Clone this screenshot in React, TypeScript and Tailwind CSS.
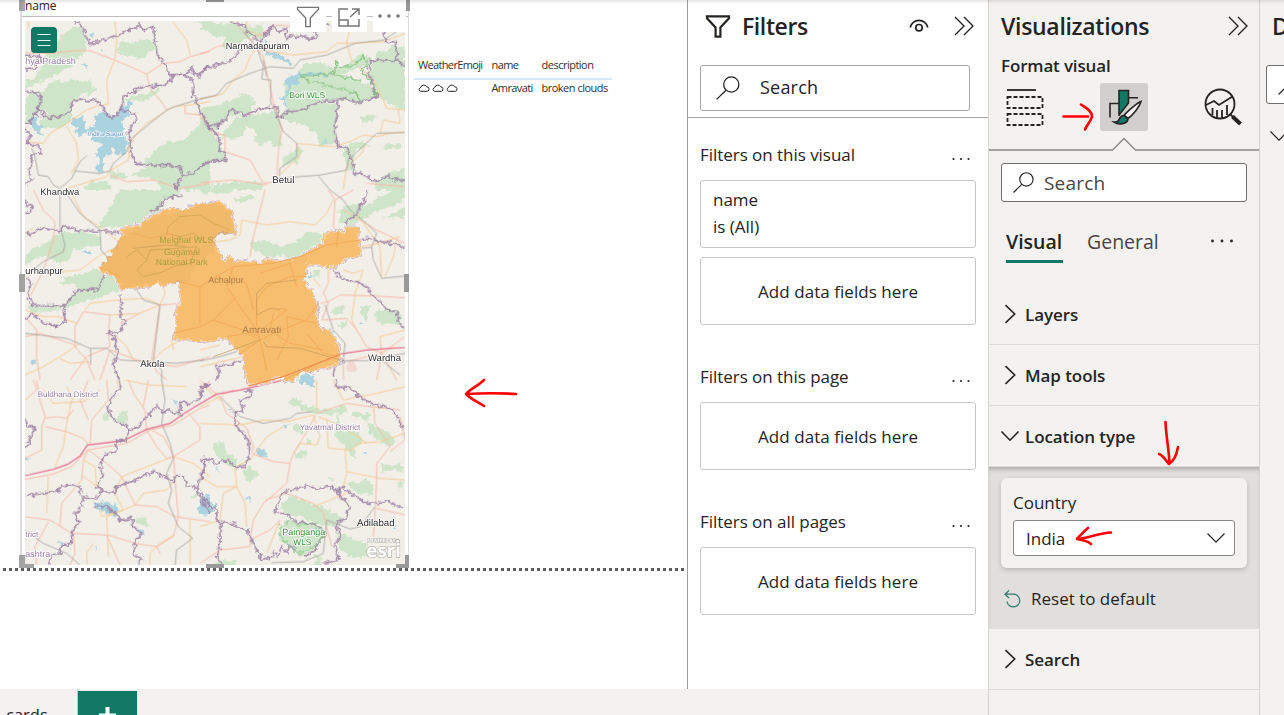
import React from "react";

type Tile = {
  x: number;
  y: number;
  green: string;
  water: string;
  pink: string;
  orange: string;
  rail: string;
  border: string;
};

const tiles: Tile[] = [
  {
    x: 0,
    y: 0,
    green:
      "M75,240 100,235 125,200 140,160 165,150 170,120 190,100 215,85 240,80 255,100 260,150 240,170 215,200 180,215 150,235 110,250 75,270Z M75,300 100,270 115,290 150,250 170,240 200,250 210,235 240,245 270,240 290,270 270,285 240,280 235,300 210,305 215,330 150,345 110,330 100,370 75,370Z M345,150 365,125 400,128 440,120 470,130 478,150 450,150 430,178 400,168 370,168Z M110,385 125,360 150,340 200,330 222,345 200,370 180,388 140,380Z M365,300 400,285 440,280 480,262 478,275 440,300 380,305Z M430,490 460,455 490,430 550,420 580,390 630,355 630,485 600,495 570,525 540,510 430,495Z M390,525 430,510 450,495 550,505 630,490 630,570 480,570 470,540Z M320,520 360,513 385,530 340,540Z M250,570 270,545 330,545 330,570Z M600,70 615,63 630,65 630,90 610,85Z",
    water:
      "M285,350 300,335 335,345 345,355 365,320 385,305 398,308 385,335 388,345 365,365 375,385 360,400 380,415 388,430 375,440 378,462 345,460 335,440 330,470 315,465 308,490 310,510 295,525 288,505 300,480 288,460 305,430 275,420 290,400 255,395 260,385 285,380Z M210,370 240,345 250,355 258,400 240,412 225,395 232,385Z M95,348 110,355 112,375 128,380 118,390 130,412 105,400 108,395 95,380Z M270,105 282,98 285,106 275,110Z M302,145 312,148 310,157Z M248,193 262,192 258,202Z M612,100 620,110",
    pink:
      "M75,158 150,160 220,152 270,152 330,175 380,195 440,222 490,190 540,185 570,170 630,155 M440,222 450,265 480,300 500,330 M555,315 555,340 600,345 630,370 M330,525 380,545 460,540 540,565 630,550",
    orange:
      "M345,63 350,120 345,175 320,240 325,312 290,318 260,330 200,370 150,400 130,430 75,425 M510,55 540,95 560,120 570,165 M200,380 230,430 235,480 215,520 M630,305 570,315 520,320 480,345 440,370 410,400 390,430 385,480 330,512 320,530 200,565 M85,63 85,85",
    rail:
      "M630,290 590,300 530,318 500,330 450,370 395,415 380,455 340,490 330,512 300,520 225,513 240,485 260,467 M225,515 215,535 180,565 160,555 145,530 115,525 105,470 95,445",
    border:
      "M225,65 250,80 255,105 272,133 280,125 300,127 325,112 360,105 380,90 410,82 415,72 422,85 435,88 458,78 466,120 470,160 490,190 505,205 513,228 540,220 550,225 575,205 590,228 605,225 612,205 630,207 M365,330 368,290 415,265 440,260 490,255 510,245 525,222 M75,275 115,280 125,300 115,325 130,345 150,355 180,350 215,330 215,308 240,297 265,302 290,300 310,325 320,345 345,352 360,330 385,332 410,350 395,380 385,400 395,430 390,455 410,490 430,495 480,495 540,500 550,530 530,550 530,570 M75,372 90,368 115,325 M550,530 590,510 630,480 M550,222 580,245 580,285 590,300 600,340 615,360 630,395 M75,390 90,393 85,435 115,435 122,460 95,465 95,490 88,520 95,540 75,555 M75,165 115,170 125,185 105,190 110,205 75,210 M95,340 120,350",
  },
  {
    x: 600,
    y: 0,
    green:
      "M0,63 30,63 70,75 100,68 130,85 190,72 190,120 160,110 130,120 100,140 80,150 60,135 80,115 40,105 20,90 0,90Z M285,220 310,195 350,185 400,205 410,175 415,205 440,200 480,160 500,165 520,185 505,230 540,290 600,330 615,330 615,140 575,140 560,155 535,150 520,185 450,215 400,230Z M250,240 300,225 400,225 470,235 510,255 535,290 480,310 410,300 350,305 300,330 260,335Z M240,340 280,335 360,310 410,310 410,350 405,430 360,440 350,400 300,370 260,365Z M0,325 40,320 90,300 140,280 165,305 150,340 90,350 40,390Z M60,410 110,350 200,340 230,330 242,370 245,435 220,440 210,420 190,435 165,425 165,390 140,375 130,410 90,415Z M0,340 40,400 55,430 75,460 75,485 20,490 0,500Z M250,500 250,470 300,440 310,460 290,490Z M430,450 450,430 490,420 500,440 465,450 460,520 440,500Z M30,570 40,555 100,545 190,545 190,570Z M550,435 600,430 600,445 560,448Z M480,350 530,345 520,360 485,370Z M525,545 560,520 615,508 615,570 520,570Z",
    water:
      "M250,240 275,225 300,228 295,250 270,260 268,285 250,300 232,300 258,285 262,260Z M370,425 380,418 378,437 370,433Z M195,118 205,130 200,150 215,158 235,160 260,175 285,200 275,198 250,180 225,172 195,160Z M290,222 365,218 390,230 360,228 295,228Z M252,300 262,300 256,335Z",
    pink:
      "M0,160 20,155 50,140 100,130 M150,120 190,170 205,240 228,340 245,390 235,450 230,540 M0,350 40,400 75,405 75,455 150,480 190,550 230,545 M0,548 100,540 200,555 M100,63 150,120 230,75 270,78 M500,550 615,560",
    orange:
      "M180,130 150,170 135,210 100,240 70,280 40,290 0,295 M180,150 280,165 380,155 410,130 440,130 550,125 615,100 M447,95 440,130 455,180 480,205 520,240 545,290 560,325 615,330 M595,330 600,370 550,360 540,400 M615,397 570,400 530,410 490,405 450,425 400,440 290,430 300,465 260,505 240,525 M430,570 440,500 485,460 495,435 M140,63 140,90 190,110",
    rail:
      "M0,297 50,285 80,250 150,220 210,200 280,205 300,180 380,165 465,130 550,120 590,95 M130,95 170,140 190,200 185,237 212,240 212,305 235,355 250,395 290,430 290,470 240,505 238,530 M235,535 360,525 440,510 445,480 530,400 615,397 M355,528 390,570 M190,180 200,230",
    border:
      "M90,63 130,75 140,95 165,115 185,125 195,105 215,82 240,95 255,85 260,120 275,105 290,115 300,105 330,118 345,115 347,95 M0,225 15,205 50,195 90,185 110,165 120,150 155,135 M380,70 390,80 M555,95 550,110 565,130 590,125 588,180 600,185 615,200 M585,180 540,180 510,182 505,215 515,240 520,270 535,290 500,300 480,310 450,300 415,295 412,310 410,345 405,395 412,430 415,445 440,440 455,480 465,525 480,515 520,545 560,530 590,540 615,540 M0,335 25,380 55,370 50,385 75,360 95,325 130,345 190,325 230,320 235,355 265,335 300,332 360,305 410,300 M25,380 55,405 60,455 75,455 77,480 20,490 0,500",
  },
  {
    x: 0,
    y: 570,
    green:
      "M360,0 540,0 530,20 490,25 480,60 440,80 420,100 370,110 290,110 320,70 340,30Z M75,200 100,175 140,155 160,140 190,125 215,130 250,125 300,140 300,170 260,170 220,180 200,215 170,220 140,200 110,200 75,230Z M75,345 110,350 190,350 210,325 235,300 220,280 180,285 195,265 250,250 300,235 320,250 340,255 360,300 330,310 270,330 220,345 150,365 100,365Z",
    water: "M240,185 255,180 275,183 270,190 250,188Z M95,512 103,508 108,518 98,522Z M130,118 140,115 142,122Z",
    pink:
      "M100,0 130,60 165,95 160,150 130,240 90,320 M630,310 550,340 480,345 M75,380 110,420 110,500 120,570 M250,365 330,375 325,430 330,470 260,500 210,570 M250,365 225,410 225,470 260,510 285,570 M330,480 410,510 455,520 530,530 630,500 M480,345 465,440 455,510 470,545 500,570 M75,440 120,430 225,465 M330,480 300,570 M360,400 420,370",
    orange:
      "M210,0 250,80 300,110 355,155 345,175 300,195 240,240 185,245 M75,360 130,380 175,380 230,400 M255,360 270,340 350,330 440,325 480,345 M330,375 420,370 480,345 M75,555 130,530 180,500 240,460 M180,505 210,520 270,515 M455,515 490,480 540,450 M345,435 380,470 400,510 M520,480 515,450 M490,290 495,310 480,345 M75,130 100,115",
    rail:
      "M180,10 180,110 195,165 190,185 130,215 105,235 M200,10 240,70 300,120 303,180 325,205 M75,430 200,445 270,475 320,475 360,510 450,515 530,520 610,510 M272,475 272,525 M480,345 460,515 485,540 485,570 M410,300 430,330 480,345",
    border:
      "M75,125 95,132 120,115 180,122 190,108 240,122 330,125 360,128 M450,70 480,50 500,22 545,18 M75,25 80,45 100,50 90,70 75,65 M80,260 95,280 85,310 95,345 190,350 235,300 295,297 313,258 M360,310 365,350 360,375 375,400 360,425 325,428 350,450 345,465 355,490 340,520 355,570 M75,385 100,372 130,400 175,410 195,390 192,350",
  },
  {
    x: 600,
    y: 570,
    green:
      "M150,155 190,150 240,170 290,155 320,125 370,130 360,160 290,200 200,200 150,170Z M415,60 460,40 500,45 540,20 580,0 615,0 615,20 590,45 540,60 500,80 450,110 420,95Z M100,30 140,15 170,20 150,30 110,38Z M0,0 100,0 80,10 0,10Z M340,240 360,240 362,265 340,262Z M400,350 430,345 430,370 400,375Z M480,350 510,345 500,400 485,380Z M515,370 570,350 610,380 600,405 540,400Z M545,80 570,75 615,50 615,85Z M430,395 440,400 430,420 412,405Z",
    water: "M300,565 315,548 345,560 340,590 300,580Z M380,415 405,425 408,440 385,432Z M322,240 342,260 330,262Z M480,395 492,400 482,403Z",
    pink:
      "M195,0 175,80 160,140 150,200 M385,0 405,30 400,110 440,180 M405,30 460,0 M430,60 480,90 530,120 615,160 M385,240 385,280 370,310 385,340 365,390 440,385 470,420 500,470 545,490 M385,335 420,315 520,318 615,323 M545,490 530,570 M545,490 590,570 M430,500 430,570 M440,515 500,500 545,495 M615,440 545,490 M360,340 385,335",
    orange:
      "M120,135 125,90 200,105 270,95 345,105 380,70 400,30 M50,155 90,150 120,135 M490,240 465,310 455,390 475,430 M485,170 540,160 600,140 M555,260 580,200 590,150 M430,240 460,250 485,240 M0,480 60,465 M470,70 540,170 545,260 M340,265 360,290 M0,530 130,500 M615,420 540,440 545,490",
    rail:
      "M390,0 430,30 450,60 500,100 530,130 515,170 520,210 545,265 615,258 M0,513 60,500 110,485 M425,512 500,512 560,500 615,490 M550,515 600,555 M375,345 400,420 435,460 430,510 M480,175 515,172",
    border:
      "M500,0 500,20 480,50 470,75 440,90 440,110 M480,155 500,145 520,150 550,155 590,165 615,170 M400,235 420,260 440,270 470,275 500,290 520,320 545,335 560,360 590,370 600,400 612,415 M430,510 405,530 400,560 M130,510 100,520 50,530 60,550 50,570",
  },
  {
    x: 0,
    y: 1140,
    green: "M310,105 325,98 325,115 312,125Z M350,105 380,95 388,125 360,132 348,120Z M525,98 545,95 540,112Z M400,415 430,410 448,442 420,435Z M570,350 600,335 590,355Z",
    water:
      "M282,372 310,365 350,375 355,395 345,410 325,400 300,390Z M515,58 530,62 530,75Z M605,350 630,340 630,405 600,400 590,390 605,375Z M75,225 90,240 78,242Z M415,450 440,450 435,467Z M168,485 190,488 185,498Z M282,495 297,505 292,507Z",
    pink:
      "M75,298 160,282 215,260 262,210 380,190 450,150 520,135 600,85 630,75 M75,60 110,30 100,0 M110,0 120,60 135,110 125,140 125,210 75,235 M135,115 170,110 200,115 220,90 M135,140 200,155 250,175 265,195 M265,210 250,240 245,300 185,370 180,440 M265,210 320,250 365,290 405,375 470,380 525,410 630,425 M75,410 150,420 215,460 320,465 360,555 M145,425 105,500 110,555 M220,460 225,520 210,555 M325,465 405,490 470,500 480,520 M470,500 520,470 535,410 M385,0 400,40 435,90 440,150 470,200 500,235 520,230 M445,0 430,80 M520,230 600,180 600,140 560,95 M520,225 525,300 535,410 M320,0 325,60 275,120 270,195 M455,150 490,170 520,225 M630,5 600,30 M265,0 240,60 265,120",
    orange:
      "M130,30 160,70 250,65 300,30 M215,60 200,130 190,200 165,260 M145,290 140,400 M200,20 220,60 M250,240 285,260 290,320 M245,285 290,320 M365,290 440,260 520,230 580,250 630,290 M365,290 345,340 370,390 320,410 325,530 M370,390 405,375 430,340 500,330 520,305 M375,0 450,15 560,20 M280,490 260,520 262,555 M570,420 570,555 M300,390 305,410 370,390 M450,555 450,520 480,490 520,465 M350,0 360,30",
    rail:
      "M75,450 130,490 200,520 240,555 M485,0 495,60 485,130 510,190 520,235 500,280 515,330 505,370 535,440 578,475 530,510 525,555",
    border:
      "M360,0 362,20 330,60 325,90 340,115 380,140 385,160 375,180 350,185 350,215 315,220 300,250 310,285 290,320 305,330 300,345 282,355 250,350 245,380 225,400 235,430 215,455 215,490 185,495 180,520 150,530 148,555 M75,345 100,345 180,330 185,315 240,320 240,345 M305,335 345,340 350,320 410,300 455,275 500,290 520,305 530,285 550,290 560,320 590,325 600,355 625,390 630,400 M385,150 410,145 440,110 470,75 490,100 500,90 540,100 540,70 580,70 600,55 605,20 630,10 M75,120 80,140 105,140 90,170 85,195 75,200 M282,378 320,380 345,400 360,420 395,415 400,440 425,460 405,490 400,525 425,535 415,550 M630,235 615,240 605,290 585,320",
  },
  {
    x: 600,
    y: 1140,
    green:
      "M255,65 290,55 320,80 400,90 430,75 440,95 400,105 340,100 300,85Z M35,190 75,185 80,220 110,235 100,265 60,240Z M125,275 150,258 180,285 140,305Z M410,100 430,150 480,160 490,190 460,200 470,240 440,210 405,170Z M285,215 320,210 310,235 285,235Z M500,125 550,150 590,180 570,200 530,180 505,155Z M540,260 600,250 615,280 580,270 545,275Z M440,310 500,300 525,320 520,345 470,340Z M235,380 270,350 350,375 430,410 410,440 350,430 300,410 260,400Z M235,440 270,425 350,430 375,460 365,490 300,530 270,500 240,480Z M410,460 500,490 500,530 440,530 420,500Z M590,305 610,310 600,330Z M345,525 365,525 365,555 345,555Z M315,180 340,180 335,195 318,190Z M280,130 310,140 310,160 285,155Z M470,95 520,105 500,120 450,105Z M380,295 400,292 400,310Z M50,545 110,540 110,555 50,555Z",
    water:
      "M165,205 190,210 205,230 175,230Z M250,135 270,130 260,145Z M0,350 35,370 50,380 20,405 0,400Z M135,350 155,347 150,362Z M48,258 58,278 50,275Z M290,0 345,0 335,18 315,12Z M490,218 500,215 498,230Z M78,85 100,88 95,95Z M580,435 592,440 585,448Z M425,152 430,165",
    pink:
      "M60,50 80,100 140,145 160,200 155,220 220,245 270,250 260,310 190,370 160,420 150,480 M345,105 330,140 280,220 270,250 M350,100 440,70 510,80 600,90 M195,360 260,340 340,370 370,400 395,500 M520,80 525,130 570,200 530,250 530,300 525,400 520,470 M600,110 615,180 570,215 M530,385 615,405 M0,550 60,510 150,500 150,480 M0,0 60,50 M65,45 100,30 M150,480 210,450 240,420",
    orange:
      "M0,80 60,50 M0,130 120,135 190,120 260,125 340,105 M110,320 70,340 60,420 0,440 M110,320 105,260 150,240 200,170 250,140 M110,320 135,370 140,440 M350,0 350,95 M340,105 360,170 350,195 300,190 290,205 M380,115 385,205 460,210 470,190 540,185 615,160 M435,205 440,280 430,320 M440,275 540,295 615,300 M340,380 440,340 M200,520 240,420 M0,290 50,320 110,320 M60,60 0,10 M300,190 280,220 M400,0 430,60 530,40 615,20 M355,110 430,140 500,190",
    rail: "M60,50 120,110 190,130 270,115 290,100 340,95 M525,380 480,440 450,447 380,420 370,520 310,545 215,548",
    border:
      "M0,240 15,235 50,250 85,238 105,262 130,262 150,220 145,180 110,140 105,100 130,90 120,60 150,50 155,32 130,32 M15,235 15,265 5,290 M0,335 20,370 50,390 50,425 90,430 140,450 155,480 165,500 185,540 M60,430 60,490 50,530 65,550 M185,540 215,530 225,515 M230,400 230,375 250,335 310,320 360,325 395,320 405,335 430,320 450,340 500,370 560,365 600,380 615,382 M415,320 415,345 450,380 440,410 410,430 420,470 405,500 415,540 370,550 M240,400 265,405 290,425 350,435 375,460 340,515 310,528 M230,535 245,500 262,520 270,495 290,510 M405,0 410,20 450,25 490,60 540,78 570,80 590,110 610,145 M0,20 30,15 M0,50 10,30",
  },
];

const district =
  "M365,685 415,675 450,648 500,623 540,622 548,635 560,622 580,610 630,605 660,600 685,622 700,640 710,705 660,700 645,705 640,720 660,755 670,775 675,782 685,765 695,775 705,782 730,780 750,786 760,778 775,788 800,775 840,780 890,770 940,745 970,725 970,700 1000,695 1010,685 1025,695 1040,675 1065,675 1078,680 1080,720 1085,770 1040,780 1010,800 985,805 930,792 920,820 915,840 940,880 955,910 955,970 970,985 1000,1000 1020,1040 1025,1080 1015,1095 980,1105 930,1118 905,1115 880,1145 855,1148 835,1130 800,1155 745,1158 735,1130 730,1090 730,1070 705,1050 695,1030 660,1015 645,1025 600,1028 550,1020 520,1020 520,1000 528,960 525,920 540,910 535,845 510,855 480,863 470,850 455,863 360,870 345,830 310,822 295,805 325,775 345,755 355,720 365,710Z";

const districtRoads =
  "M535,845 600,860 640,835 700,800 820,790 900,770 980,735 1080,720 M700,800 680,860 720,920 770,990 780,1020 820,1000 920,960 955,910 M520,1000 600,980 640,960 710,890 M600,970 600,860 M780,1020 720,1060 M780,1020 800,1110 M780,1020 740,1000 680,1010 M770,980 770,900 800,860 870,830 920,830 M790,985 860,930 840,925 M820,940 810,990 870,1030 970,1050 M860,950 865,1010 M900,770 960,745 M400,700 450,715 520,700 M300,800 360,830 M700,830 740,850 760,930 M640,960 700,980 780,1010 M1010,740 1015,690 M780,820 870,790 890,860 M865,1010 830,1080 M920,1000 970,1060 1020,1070 M860,950 950,970 M850,1140 1020,1060";
const districtRail =
  "M770,945 770,880 800,850 890,840 M790,1025 800,1040 900,1045 1020,1080 M640,1070 780,1020 M400,745 500,735 560,740 M770,945 810,925 840,928";

const MapView = () => (
  <svg className="block h-[544px] w-[380px]" viewBox="75 63 1140 1632" preserveAspectRatio="none">
    <defs>
      <filter id="coast" x="0" y="0" width="100%" height="100%" colorInterpolationFilters="sRGB">
        <feTurbulence type="fractalNoise" baseFrequency="0.07" numOctaves="2" seed="4" result="n" />
        <feDisplacementMap in="SourceGraphic" in2="n" scale="22" xChannelSelector="R" yChannelSelector="G" />
      </filter>
    </defs>
    <rect x="75" y="63" width="1140" height="1632" fill="#f2efe9" />
    <g filter="url(#coast)">
      {tiles.map((t, i) => (
        <g key={i} transform={`translate(${t.x} ${t.y})`}>
          <path d={t.green} fill="#cfe5c9" />
          <path d={t.water} fill="#aad3df" />
        </g>
      ))}
      <circle cx="1054" cy="1100" r="16" fill="#f2d8d3" />
    </g>
    <g fill="none" strokeLinejoin="round">
      {tiles.map((t, i) => (
        <g key={i} transform={`translate(${t.x} ${t.y})`}>
          <path d={t.orange} stroke="#f5cb92" strokeWidth="3" />
          <path d={t.pink} stroke="#f9b9a6" strokeWidth="3" />
          <path d={t.rail} stroke="#999693" strokeWidth="2.2" />
        </g>
      ))}
      <path
        d="M75,1427 160,1408 205,1392 240,1368 262,1335 370,1322 440,1288 510,1270 560,1235 650,1182 720,1170 850,1140 M1020,1062 1100,1050 1215,1042"
        stroke="#e66f8c"
        strokeWidth="3.8"
      />
    </g>
    <g filter="url(#coast)" fill="none">
      {tiles.map((t, i) => (
        <path key={i} d={t.border} transform={`translate(${t.x} ${t.y})`} stroke="#a083a6" strokeWidth="5" />
      ))}
      <path
        d="M900,228 930,245 1000,260 1070,280 1080,305 M900,228 1000,222 1080,240 M1000,222 1010,180 1020,205 1060,195 1095,165 1100,200 1085,210 1120,255 1130,290"
        stroke="#82bf7e"
        strokeWidth="3.5"
      />
      <path
        d="M840,1580 870,1560 890,1575 950,1570 970,1600 960,1630 920,1650 890,1660 860,1630 840,1600Z"
        stroke="#8cc787"
        strokeWidth="3"
      />
    </g>
    <g filter="url(#coast)">
      <path d={district} fill="#f7be70" stroke="#fff" strokeWidth="7" strokeOpacity=".65" />
      <path
        d="M365,712 450,655 540,635 640,605 690,640 700,700 650,705 640,760 600,780 560,850 470,845 365,865 345,825 300,805Z"
        fill="#f0ba6a"
      />
      <path d={district} fill="none" stroke="#b89cb8" strokeWidth="2" />
    </g>
    <g fill="none" strokeLinejoin="round">
      <path
        d="M505,680 540,650 600,645 640,670 690,690 M505,680 500,700 540,710 580,700 620,730 M410,810 440,780 450,750 530,745 590,740 570,790 520,800 490,815 430,830Z M380,770 410,750 440,780"
        stroke="#d6a955"
        strokeWidth="3"
      />
      <path d={districtRoads} stroke="#f3ab57" strokeWidth="3" />
      <path d={districtRail} stroke="#cf9f5b" strokeWidth="2.5" />
      <path d="M745,1158 850,1130 1020,1064" stroke="#ee8f55" strokeWidth="3.5" />
    </g>
    <g
      fontFamily="'Liberation Sans', Arial, sans-serif"
      fontSize="29"
      strokeLinejoin="round"
      textRendering="geometricPrecision"
      style={{ paintOrder: "stroke" }}
      stroke="#fff"
      strokeOpacity=".85"
      strokeWidth="6"
      fill="#2f2f33"
    >
      <text x="677" y="147" fontSize="27.5">Narmadapuram</text>
      <text x="817" y="548">Betul</text>
      <text x="121" y="584" fontSize="28">Khandwa</text>
      <text x="76" y="821" fontSize="28">urhanpur</text>
      <text x="421" y="1101">Akola</text>
      <text x="1104" y="1084" fontSize="28.500">Wardha</text>
      <text x="1071" y="1578">Adilabad</text>
      <g fill="#9b7ea9" fontSize="27">
        <text x="76" y="192">hya Pradesh</text>
        <text x="113" y="1192" fontSize="24">Buldhana District</text>
        <text x="899" y="1289" fontSize="24.500">Yavatmal District</text>
        <text x="76" y="1612" fontSize="24">trict</text>
        <text x="76" y="1672">ashtra</text>
      </g>
      <g fill="#359a35" fontSize="27">
        <text x="868" y="294" fontSize="25.500">Bori WLS</text>
        <text x="847" y="1605">Painganga</text>
        <text x="880" y="1636" fontSize="25">WLS</text>
      </g>
      <text x="262" y="407" fontSize="20" fill="#5f93c4" strokeWidth="4">
        Indira Sagar
      </text>
    </g>
    <g fontFamily="'Liberation Sans', Arial, sans-serif" textRendering="geometricPrecision" fontSize="27" fill="#a9a03c">
      <text x="478" y="728">Melghat WLS</text>
      <text x="492" y="764" fontSize="26.500">Gugamal</text>
      <text x="467" y="796" fontSize="26">National Park</text>
      <text x="625" y="848" fill="#a97c49">Achalpur</text>
      <text x="727" y="998" fontSize="29.500" fill="#a97c49">Amravati</text>
    </g>
    <g
      fontFamily="'Noto Sans', sans-serif"
      fill="#fff"
      stroke="#77776f"
      strokeWidth="5"
      strokeOpacity=".5"
      textRendering="geometricPrecision"
      style={{ paintOrder: "stroke" }}
    >
      <text x="1102" y="1627" fontSize="13" fontWeight="700" strokeWidth="3">POWERED BY</text>
      <circle cx="1193" cy="1624" r="5" />
      <text x="1099" y="1670" fontSize="56" fontWeight="700" strokeWidth="4">esri</text>
    </g>
  </svg>
);

const Funnel = ({ className, w }: { className: string; w: number }) => (
  <svg className={className} viewBox="0 0 26 24" fill="none" stroke="currentColor" strokeWidth={w}>
    <path d="M1.5 1.5H24.5V3.5L15.5 13V22.5H10.5V13L1.5 3.5Z" />
  </svg>
);

const Magnifier = ({ className }: { className: string }) => (
  <svg className={className} viewBox="0 0 24 24" fill="none" stroke="currentColor" strokeWidth="1.3">
    <circle cx="15.3" cy="8.5" r="7.6" />
    <path d="M10 14.2L.6 23.4" />
  </svg>
);

const DoubleChevron = () => (
  <svg className="h-[20px] w-[20px] shrink-0" viewBox="0 0 20 20" fill="none" stroke="currentColor" strokeWidth="1.4">
    <path d="M1 1L10 10L1 19M10 1L19 10L10 19" />
  </svg>
);

const Chevron = ({ open, thin }: { open?: boolean; thin?: boolean }) => (
  <svg
    className="h-[20px] w-[20px] shrink-0"
    viewBox="0 0 20 20"
    fill="none"
    stroke="currentColor"
    strokeWidth={thin ? 1.2 : 1.6}
  >
    {open ? <path d="M1.5 5.5L10 14.2L18.5 5.5" /> : <path d="M5.5 1.2L14.7 10L5.5 18.8" />}
  </svg>
);

const Dots = ({ className, r, gap }: { className: string; r: number; gap: number }) => (
  <svg className={className} viewBox="-12 -2 24 4" fill="currentColor">
    <circle cx={-gap} r={r} />
    <circle r={r} />
    <circle cx={gap} r={r} />
  </svg>
);

const MapVisual = () => (
  <div className="relative h-[568px] w-[389px] border-r border-l-2 border-[#dcdcdc] bg-white pl-[3px]">
    <div className="-ml-[3px] h-[17px] border-b border-[#bdbdbd] pl-[3px] text-[12px] leading-[12px] text-[#252423]">
      <span className="tracking-[-0.1px]">name</span>
    </div>
    <div className="mt-[4px]">
      <MapView />
    </div>
    <div className="absolute top-[27px] left-[9px] flex h-[26px] w-[26px] items-center justify-center rounded-[4px] bg-[#117865]">
      <svg className="h-[14px] w-[14px]" viewBox="0 0 14 14" stroke="#e4f3ef" strokeWidth="1">
        <path d="M.5 1.5H13.5M.5 7.5H13.5M.5 12.5H13.5" />
      </svg>
    </div>
    <div className="absolute top-0 left-[268px] flex h-[32px] gap-[6px] text-[#767676]">
      <div className="w-[36px] bg-white pt-[6px] pl-[6px]">
        <Funnel className="h-[22px] w-[24px]" w={1.5} />
      </div>
      <div className="w-[35px] bg-white pt-[8px] pl-[6px]">
        <svg className="h-[19px] w-[22px]" viewBox="0 0 22 19" fill="none" stroke="currentColor" strokeWidth="1.5">
          <path d="M10 1H1V18H21V11M1 12H10V18M12 9L20.5 1.5M14 1H21V7" />
        </svg>
      </div>
      <div className="w-[33px] bg-white pt-[14px] pl-[4px]">
        <Dots className="h-[4px] w-[24px]" r={1.8} gap={9} />
      </div>
    </div>
    <div className="absolute top-0 -left-[3px] h-[11px] w-[6px] bg-[#8e8e8e]/80" />
    <div className="absolute top-0 left-[184px] h-[2px] w-[18px] bg-[#999]" />
    <div className="absolute top-0 right-[-2px] h-[11px] w-[4px] bg-[#999]" />
    <div className="absolute top-[274px] -left-[3px] h-[18px] w-[6px] bg-[#999]/90" />
    <div className="absolute top-[274px] right-[-1px] h-[18px] w-[5px] bg-[#999]" />
    <div className="absolute bottom-0 -left-[3px] h-[13px] w-[15px] border-b-4 border-l-[6px] border-[#999]/90" />
    <div className="absolute bottom-0 left-[184px] h-[4px] w-[18px] bg-[#999]" />
    <div className="absolute right-[-1px] bottom-0 h-[13px] w-[13px] border-r-4 border-b-4 border-[#999]" />
  </div>
);

const Cloud = () => (
  <svg className="h-[8px] w-[12px]" viewBox="0 0 12 8" fill="none" stroke="#252423" strokeWidth="1">
    <path d="M2.6 7.3A1.9 1.9 0 0 1 2.6 3.6A3.2 3.2 0 0 1 8.6 2.8A2.3 2.3 0 0 1 9.4 7.3Z" />
  </svg>
);

const WeatherTable = () => (
  <div className="mt-[53px] ml-[5px] w-[198px] text-[11px] text-[#323130]">
    <div className="flex h-[27px] items-center border-b-2 border-[#d5e8f8] pl-[4px]">
      <span className="w-[73.5px] tracking-[-0.65px]">WeatherEmoji</span>
      <span className="w-[50px] tracking-[-0.6px]">name</span>
      <span className="tracking-[-0.5px]">description</span>
    </div>
    <div className="flex h-[16px] items-center pl-[4px]">
      <span className="flex w-[73.5px] gap-[2px]">
        <Cloud />
        <Cloud />
        <Cloud />
      </span>
      <span className="w-[50px] tracking-[-0.6px]">Amravati</span>
      <span className="tracking-[-0.5px] whitespace-nowrap">broken clouds</span>
    </div>
  </div>
);

const SectionTitle = ({ children }: { children: React.ReactNode }) => (
  <div className="flex h-[24px] w-[276px] items-center justify-between pr-[5px]">
    <span className="text-[17px] tracking-[-0.04px]">{children}</span>
    <Dots className="mt-[8px] h-[4px] w-[20px]" r={1.3} gap={9} />
  </div>
);

const FieldWell = () => (
  <div className="flex h-[68px] w-[276px] items-center justify-center rounded-[3px] border border-[#c8c6c4] pt-[2px] text-[17px] tracking-[0.05px]">
    Add data fields here
  </div>
);

const FiltersPane = () => (
  <section className="h-[689px] w-[301px] border-l border-[#a19f9d] bg-white text-[#252423]">
    <div className="h-[118px] border-b border-[#a8a6a4] pt-[13px] pl-[12px]">
      <div className="flex h-[26px] items-center">
        <Funnel className="ml-[5px] h-[23px] w-[26px]" w={2.3} />
        <h2 className="ml-[11px] w-[167px] text-[23px] font-semibold tracking-[-0.4px]">Filters</h2>
        <svg className="-mt-[2px] h-[13px] w-[20px]" viewBox="0 0 20 13" fill="none" stroke="currentColor" strokeWidth="1.7">
          <path d="M1.2 8.5A9 9 0 0 1 18.8 8.5" />
          <circle cx="10" cy="8.7" r="3.2" />
        </svg>
        <div className="ml-[25px]">
          <DoubleChevron />
        </div>
      </div>
      <div className="mt-[26px] flex h-[46px] w-[270px] items-center rounded-[3px] border border-[#a8a6a4] pl-[15px]">
        <Magnifier className="h-[24px] w-[24px]" />
        <span className="mt-[-2px] ml-[20px] text-[18px] tracking-[0.2px]">Search</span>
      </div>
    </div>
    <div className="pt-[25px] pl-[12px]">
      <SectionTitle>Filters on this visual</SectionTitle>
      <div className="mt-[13px] h-[68px] w-[276px] rounded-[3px] border border-[#c8c6c4] pt-[5px] pl-[12px] text-[17px] leading-[27px]">
        <div>name</div>
        <div>is (All)</div>
      </div>
      <div className="mt-[9px]">
        <FieldWell />
      </div>
      <div className="mt-[40px] mb-[13px]">
        <SectionTitle>Filters on this page</SectionTitle>
      </div>
      <FieldWell />
      <div className="mt-[40px] mb-[13px]">
        <SectionTitle>Filters on all pages</SectionTitle>
      </div>
      <FieldWell />
    </div>
  </section>
);

const Group = ({ label, open }: { label: string; open?: boolean }) => (
  <div className="flex h-[61px] items-center border-b border-[#dddbd9] pl-[11px]">
    <Chevron open={open} />
    <span className="mt-[1px] ml-[5px] text-[17px] font-semibold tracking-[-0.08px]">{label}</span>
  </div>
);

const VisualizationsPane = () => (
  <section className="relative flex h-[715px] w-[272px] flex-col border-x border-[#d6d4d2] bg-[#f3f2f1] text-[#252423]">
    <div className="mt-[13px] flex h-[26px] items-center justify-between pr-[11px] pl-[12px]">
      <h2 className="text-[23px] font-semibold tracking-[-0.3px]">Visualizations</h2>
      <DoubleChevron />
    </div>
    <div className="mt-[15px] h-[24px] pl-[12px] text-[17px] leading-[24px] font-semibold tracking-[-0.15px]">Format visual</div>
    <div className="mt-[5px] flex h-[48px] items-center">
      <svg className="ml-[17px] h-[38px] w-[38px]" viewBox="0 0 38 38" fill="none" stroke="#252423" strokeWidth="1.8">
        <path d="M1 2H30" />
        <path d="M1.5 9H36.5V20H1.5ZM1.5 26H36.5V37H1.5Z" strokeDasharray="4 2" />
      </svg>
      <div className="ml-[56px] flex h-[48px] w-[48px] items-center justify-center rounded-[3px] bg-[#d2d0ce]">
        <svg className="ml-[2px] h-[36px] w-[34px]" viewBox="0 0 34 36" fill="none" stroke="#252423" strokeWidth="1.6">
          <path d="M2 28.500V14.5H11M21 8.8H30" />
          <path d="M11 27V1.500H20.500V14L11 26Z" fill="#117865" />
          <path d="M33 12.500C29 14 19 22.500 16 26.500L20 29.500C25 26 31.500 18 33 12.500Z" fill="#f3f2f1" stroke="#d2d0ce" strokeWidth="4" />
          <path d="M33 12.500C29 14 19 22.500 16 26.500L20 29.500C25 26 31.500 18 33 12.500Z" fill="#f3f2f1" />
          <path d="M16 26.500C12 26 12 29.500 10.500 31.500C9.500 33 8 33.200 6 33C10 36 20 35.500 20 29.500Z" fill="#117865" />
        </svg>
      </div>
      <svg className="ml-[56px] h-[38px] w-[38px]" viewBox="0 0 38 38" fill="none" stroke="#252423" strokeWidth="1.8">
        <circle cx="16" cy="16" r="14.5" />
        <path d="M2 17L10 13L15 17L28.5 8.5M8.5 20V27M13 22V30M18 22V30M23 17V27" />
        <path d="M26 26L29 29" />
        <path d="M28.5 28.5L36.5 36" strokeWidth="4" />
      </svg>
    </div>
    <svg className="mt-[6px] h-[14px] w-[270px] shrink-0" viewBox="0 0 270 14" fill="none" stroke="#8a8886" strokeWidth="1.4">
      <path d="M0 13H123.5L135 1.5L146.5 13H270" />
    </svg>
    <div className="mx-[12px] mt-[12px] flex h-[39px] w-[246px] shrink-0 items-center rounded-[3px] border border-[#706e6c] bg-white pl-[11px]">
      <Magnifier className="h-[21px] w-[21px]" />
      <span className="mt-[1px] ml-[10px] text-[19px] tracking-[0.2px] text-[#484644]">Search</span>
    </div>
    <div className="mt-[27px] flex h-[34px] shrink-0 pl-[17px] text-[19.5px] leading-[26px]">
      <span className="w-[57px] border-b-[3px] border-[#117865] font-semibold">Visual</span>
      <span className="ml-[24px] w-[123px] text-[#484644]">General</span>
      <Dots className="mt-[10px] h-[4px] w-[24px]" r={1.4} gap={9.5} />
    </div>
    <div className="mt-[21px] shrink-0">
      <Group label="Layers" />
      <Group label="Map tools" />
      <Group label="Location type" open />
    </div>
    <div className="h-[162px] shrink-0 bg-[#e1dfdd] px-[12px] pt-[11px] shadow-[inset_0_5px_5px_-3px_rgba(0,0,0,0.25)]">
      <div className="h-[90px] w-[246px] rounded-[6px] bg-[#f3f2f1] px-[12px] pt-[12px] shadow-[0_2px_5px_rgba(0,0,0,0.18)]">
        <div className="h-[26px] text-[17px] leading-[26px]">Country</div>
        <div className="mt-[4px] flex h-[36px] items-center justify-between rounded-[3px] border border-[#8a8886] bg-white pr-[8px] pl-[12px] text-[17px]">
          <span className="mt-[1px]">India</span>
          <Chevron open thin />
        </div>
      </div>
      <div className="mt-[18px] flex h-[26px] items-center pl-[3px] text-[17px]">
        <svg className="h-[18px] w-[18px]" viewBox="0 0 18 18" fill="none" stroke="#2d7a6c" strokeWidth="1.2">
          <path d="M5 .5L1 4.2L5 8M1.2 4.2H10A6.4 6.4 0 1 1 3 11.5" />
        </svg>
        <span className="ml-[9px]">Reset to default</span>
      </div>
    </div>
    <Group label="Search" />
  </section>
);

const Annotations = () => (
  <svg
    className="pointer-events-none absolute top-0 left-0 h-[715px] w-[1284px]"
    viewBox="0 0 1284 715"
    fill="none"
    stroke="#fe0000"
    strokeWidth="2.6"
    strokeLinecap="round"
    strokeLinejoin="round"
  >
    <path d="M516 394C500 393 482 393 467 394M484 380C478 386 470 389 466 394C472 400 478 402 484 406" />
    <path d="M1063.500 116.500H1088M1081 104.500C1086 108 1092 111 1092 116C1092 120 1087 124 1085 129.500" />
    <path d="M1165.500 422C1166 436 1169 450 1169.500 463M1159 454C1164 456 1166 461 1169 464C1174 461 1177 453 1178 447" />
    <path d="M1111 532.500C1100 533 1088 538 1078 539M1088 528C1083 532 1080 536 1077 539C1083 540 1088 541 1091 544" />
  </svg>
);

export default function App() {
  return (
    <div className="relative flex h-[715px] w-[1284px] overflow-hidden bg-[#f3f2f1] font-['Open_Sans','Noto_Sans',sans-serif]">
      <div className="w-[988px]">
        <div className="flex h-[689px]">
          <main className="h-[689px] w-[687px] bg-white">
            <div className="flex pl-[20px]">
              <MapVisual />
              <WeatherTable />
            </div>
            <div className="ml-[3px] h-[3px] bg-[repeating-linear-gradient(90deg,#605e5c_0_3px,transparent_3px_6px)]" />
          </main>
          <FiltersPane />
        </div>
        <footer className="flex h-[26px] items-start overflow-hidden text-[#252423]">
          <div className="h-[26px] w-[78px] border-r border-[#c8c6c4] pt-[14px] pl-[6px] text-[16.5px] leading-[24px]">cards</div>
          <div className="mt-[2px] flex h-[40px] w-[59px] justify-center bg-[#117865] pt-[16px]">
            <svg className="h-[17px] w-[17px]" viewBox="0 0 17 17" stroke="#fff" strokeWidth="4">
              <path d="M8.5 0V17M0 8.5H17" />
            </svg>
          </div>
        </footer>
      </div>
      <VisualizationsPane />
      <aside className="relative h-[715px] flex-1 overflow-hidden text-[#252423]">
        <h2 className="mt-[13px] ml-[12px] h-[26px] text-[23px] leading-[26px] font-semibold">Data</h2>
        <div className="mt-[26px] ml-[6px] h-[39px] w-[120px] rounded-[3px] border border-[#706e6c] bg-white pt-[8px] pl-[11px]">
          <Magnifier className="h-[21px] w-[21px]" />
        </div>
        <div className="mt-[22px] ml-[9px]">
          <Chevron open thin />
        </div>
      </aside>
      <div className="pointer-events-none absolute top-0 left-0 h-[4px] w-full bg-linear-to-b from-black/10 to-transparent" />
      <Annotations />
    </div>
  );
}
